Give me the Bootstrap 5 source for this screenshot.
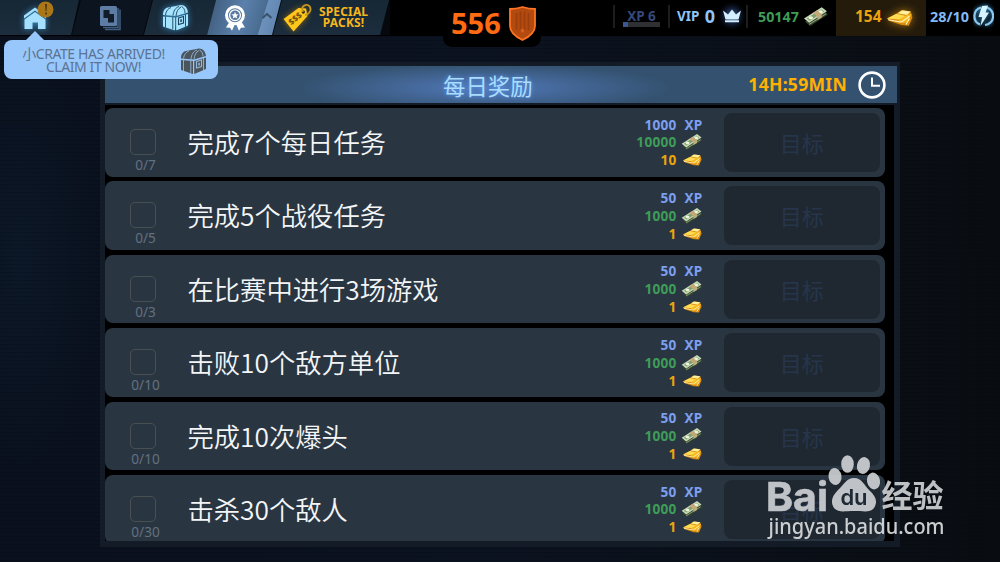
<!DOCTYPE html>
<html lang="zh-CN">
<head>
  <meta charset="UTF-8">
  <title>每日奖励</title>
  <link rel="stylesheet" href="https://cdn.jsdelivr.net/npm/bootstrap@5.3.2/dist/css/bootstrap.min.css">
  <style>
    body {
      width: 1000px;
      height: 562px;
      font-family: "Noto Sans", "Noto Sans CJK SC", sans-serif;
      color: #fff;
      background:
        repeating-linear-gradient(rgba(0,0,0,.16) 0 1px, transparent 1px 4px),
        radial-gradient(ellipse 90px 230px at 20px 260px, #0c1828, transparent),
        linear-gradient(90deg, #0a101d, #0c1320 50%, #090d12);
    }
    svg { display: block; flex: none; }

    /* top bar */
    .topbar { height: 36px; background: #000; }
    .tabs { width: 390px; height: 35px; background: #05090e; }
    .tab { height: 35px; background: linear-gradient(#162735, #1c2d3d); clip-path: polygon(9px 0, 100% 0, calc(100% - 9px) 100%, 0 100%); }
    .tab-home { width: 79px; clip-path: polygon(0 0, 100% 0, calc(100% - 8px) 100%, 0 100%); }
    .tab-doc { width: 80px; margin-left: -7px; background: #0c141f; }
    .tab-crate { width: 72px; margin-left: -8px; }
    .tab-medal { width: 74px; margin-left: -9px; background: linear-gradient(107deg, #3b5776 0, #5b80ab 45%, #4a6c91 72%, #6c91bb 73%, #5c80ab); }
    .tab-packs { width: 116px; margin-left: -8px; }
    .packs-text { padding: 0 0 1px 1px; font: bold 12px/11.3px "Noto Sans", sans-serif; color: #f5b51c; text-align: center; letter-spacing: .15px; }
    .score { width: 98px; height: 47px; margin-left: 53px; background: #000; border-radius: 0 0 9px 9px; color: #ff6a13; font-size: 29px; line-height: 47px; }
    .score-value { width: 66px; padding: 0 0 2px 8px; }
    .stat { height: 36px; line-height: 33px; font-weight: 700; font-size: 14.5px; white-space: nowrap; }
    .sep { width: 2px; height: 23px; margin-top: 5px; background: #1d1d1d; }
    .xp { width: 37px; height: 28px; margin: 0 8px; font-size: 13.5px; line-height: 32px; color: #34487a; text-align: center; }
    .xp-bar { width: 37px; height: 5px; margin-top: -10px; background: #2f3033; }
    .xp-bar div { width: 5px; height: 5px; background: #3d5793; }

    /* crate message */
    .bubble { left: 4px; top: 40px; width: 213.5px; height: 39px; padding: 0 11px 0 12px; background: #98c8fb; border-radius: 8px; color: #5b7292; font: 14px/12.6px "Noto Sans", "Noto Sans CJK SC", sans-serif; }
    .bubble::before { content: ""; position: absolute; left: 22px; top: -9px; border: solid transparent; border-width: 0 9px 9px; border-bottom-color: #98c8fb; }
    .bubble-text { width: 155px; padding-top: 3px; text-align: center; letter-spacing: -.42px; white-space: nowrap; }

    /* panel */
    .panel { width: 800px; height: 485px; margin: 26px 0 0 100px; padding: 4px 3px 0 5px; background: #131c26; }
    .panel-head { height: 37px; background: radial-gradient(ellipse 185px 24px at 380px 22px, #5078b8, transparent), #345270; }
    .panel-title { width: 90px; margin-left: 338px; font-size: 22.4px; line-height: 36px; color: #a9dcff; text-shadow: 0 0 5px #5c9cf0; font-family: "Noto Sans CJK SC", sans-serif; }
    .timer { color: #ffb000; font-weight: 700; font-size: 17.6px; letter-spacing: .25px; }
    .missions { width: 789px; height: 436px; margin-top: 2px; padding-top: 3px; background: #000; overflow: hidden; }
    .mission { width: 780px; height: 68.6px; margin-bottom: 4.85px; padding: 0 5px 0 25px; border-radius: 8px; background: #293642; flex: none; }
    .check-col { width: 31px; }
    .check-box { width: 26px; height: 26px; margin: 21px 0 0; border: 1.5px solid #4a5051; border-radius: 5px; }
    .progress-text { width: 31px; margin-top: 1px; font: 400 13.6px/17px "Noto Sans", sans-serif; color: #64707e; text-align: center; }
    .mission-title { margin-left: 26.5px; padding-bottom: 2px; font: 350 26.3px/67px "Noto Sans CJK SC", sans-serif; color: #f3f5f7; }
    .rewards { width: 68px; margin-right: 21px; font-weight: 700; font-size: 13.6px; line-height: 17.8px; letter-spacing: .25px; }
    .reward-unit { width: 26px; padding-left: 4px; }
    .c-xp { color: #7d9ff0; }
    .c-cash { color: #3f9c58; }
    .c-gold { color: #eba40e; }
    .goal { width: 156.5px; height: 59px; border-radius: 8px; background: #1f2831; color: #26354b; font: 400 22px/59px "Noto Sans CJK SC", sans-serif; text-align: center; }

    .watermark { left: 760px; top: 450px; }
  </style>
</head>
<body class="position-relative overflow-hidden m-0">

<!-- shared icons -->
<svg width="0" height="0" class="position-absolute">
  <symbol id="cash" viewBox="0 0 24 20">
    <path d="M1 15 19 4l4 4L6 19z" fill="#34462c"/>
    <path d="M0 12 17 1l5 4L5 16z" fill="#c9d9b6"/>
    <path d="M2.500 12 16.500 3l3 2.200L5.500 14z" fill="#7fa070"/>
    <ellipse cx="6.500" cy="11.200" rx="2.200" ry="1.500" fill="#eef3dc"/>
    <ellipse cx="16" cy="5.500" rx="2.200" ry="1.500" fill="#eef3dc"/>
    <path d="m8.500 6.600 4-2.500 4.500 4V11l-4 2.400V10z" fill="#c4a878"/>
    <path d="m5 17.500 16-10" stroke="#a9c093" stroke-width=".8"/>
  </symbol>
  <symbol id="gold" viewBox="0 0 22 15">
    <path d="M0 8 8 4l4-3 8 1 1.500 5-3 7-6-.5L2 10z" fill="#d8890b"/>
    <path d="m0 8 8-4 9 2-5 3z" fill="#ffdb52"/>
    <path d="m9 3.500 4-2.500 7 1-3 3z" fill="#fff09a"/>
    <path d="m9 9 8-4 4-1-3 6-4 2z" fill="#f7b920"/>
    <path d="m1 9 11 2 7-5M16 13l3-5" stroke="#fff4b8" stroke-width="1" fill="none"/>
  </symbol>
  <!-- chest with a domed lid, lit front on the right -->
  <symbol id="crate" viewBox="0 0 27 26">
    <path d="M1 10.500C1 6 3 3.500 6 3L19 .5c4 0 6.500 3 7 7.500l-12 3.500z"/>
    <path d="m1 12 12 1v13L1 22zM14.200 13 26 9.500V21l-11.800 5z"/>
    <path d="M3.500 10.500C4 6.500 6 4 9 3M11 11C11.500 6.500 13.500 3 17 2M14 11.500C14.500 7 16 4 19 2.500M23 8.500C23 5 21.500 3 19.500 2" stroke="var(--line)" stroke-width=".9" fill="none"/>
    <path d="M3.500 12v11M10.800 12.500V25M23.500 10v12" stroke="var(--line)" stroke-width=".9" fill="none"/>
    <path d="m16.500 13.500 5-1.500v6.500l-5 1.500z" stroke="var(--line)" stroke-width="1.100"/>
    <path d="M18.300 14.800h1.500v2.700h-1.500z" fill="var(--line)"/>
  </symbol>
</svg>

<header class="topbar d-flex align-items-start">
  <nav class="tabs d-flex">
    <div class="tab tab-home">
      <svg width="79" height="35" viewBox="0 0 79 35">
        <g fill="#a5e1ff" style="filter:drop-shadow(0 0 3px #3e93c8)">
          <path d="M24 15.500 35 7.500l11 8v3L35 10.500l-11 8z"/>
          <path d="M24.500 19.500 35 12l10.500 7.500V29H38v-6.500h-5.500V29h-8z"/>
        </g>
        <circle cx="45.500" cy="9.500" r="8" fill="#a97618"/>
        <path d="M45 4h2l-.5 7h-1zM45.200 12.500h1.800v2h-1.800z" fill="#4c3a12"/>
      </svg>
    </div>
    <div class="tab tab-doc">
      <svg width="80" height="35" viewBox="72 0 80 35">
        <path d="M105 29.500h15V9.500M103 27.500h15V8" fill="none" stroke="#3f5e80" stroke-width="1.500"/>
        <rect x="100" y="6" width="17" height="20" rx="1.500" fill="#5d7da5"/>
        <path d="M103.500 10h6v4h4.500v8.500h-6V18h-4.500z" fill="#121b28"/>
      </svg>
    </div>
    <div class="tab tab-crate">
      <svg width="72" height="35" viewBox="144 0 72 35">
        <use href="#crate" x="162" y="4.500" width="27" height="26" fill="#a5e4ff" style="--line:#1f4259;filter:drop-shadow(0 0 3px #3685b5)"/>
      </svg>
    </div>
    <div class="tab tab-medal">
      <svg width="74" height="35" viewBox="207 0 74 35">
        <path d="m230 21-4 6.500 4 .2 2 3 3-7zM241 21l4 6.500-4 .2-2 3-3-7z" fill="#fff"/>
        <circle cx="235" cy="15.300" r="8.500" fill="#57799f" stroke="#fff" stroke-width="3"/>
        <circle cx="235" cy="15.300" r="5.400" fill="none" stroke="#fff" stroke-width="1.300"/>
        <path d="m235 11.800 1 2.400 2.600.2-2 1.700.7 2.500-2.300-1.400-2.300 1.400.7-2.500-2-1.700 2.600-.2z" fill="#fff"/>
        <path d="m262.500 18 4.500-4 4.500 4" fill="none" stroke="#3b546f" stroke-width="2.200"/>
      </svg>
    </div>
    <div class="tab tab-packs d-flex align-items-center">
      <svg width="45" height="35" viewBox="273 0 45 35">
        <path d="m283.500 19 15-11 7.500.5 1.500 7.500-14 15.500z" fill="#ffc61c" style="filter:drop-shadow(0 0 3px #8a6410)"/>
        <circle cx="303.300" cy="12" r="1.700" fill="#2b2a1c"/>
        <path d="M303 12c-3-7 5-9 7-5s-2 8-5 8" fill="none" stroke="#c69420" stroke-width="1.800"/>
        <text transform="translate(291.500 25.500) rotate(-40)" font-size="8.500" font-weight="700" fill="#6a4f10">$$$</text>
      </svg>
      <div class="packs-text">SPECIAL<br>PACKS!</div>
    </div>
  </nav>

  <div class="score d-flex align-items-center fw-bold">
    <span class="score-value">556</span>
    <svg width="27" height="35" viewBox="0 0 27 35">
      <path d="M1 3Q7 3 13.500 1 20 3 26 3v17q0 8-12.500 14Q1 28 1 20z" fill="#b34a10" stroke="#ff7422" stroke-width="1.800"/>
      <path d="M7.500 7v17M11.500 5.500v19M15.500 5.500v19M19.500 7v17" stroke="#9c3f0d" stroke-width="1.800"/>
      <path d="m13.500 22 .8 1.600 1.700.2-1.200 1.200.3 1.700-1.600-.8-1.600.8.3-1.700-1.200-1.200 1.700-.2z" fill="#d9601c"/>
    </svg>
  </div>

  <div class="stat d-flex" style="margin-left:72px">
    <div class="sep"></div>
    <div class="xp">XP 6<div class="xp-bar"><div></div></div></div>
    <div class="sep"></div>
    <div class="d-flex" style="width:76px;padding-left:7px;color:#8fc5fa">
      <span style="width:29px;font-size:13.500px">VIP</span>
      <span style="width:14px;font-size:18px">0</span>
      <svg width="28" height="34" viewBox="718 0 28 34">
        <defs><radialGradient id="glow"><stop stop-color="#4a77c8" stop-opacity=".9"/><stop offset="1" stop-color="#16264a" stop-opacity="0"/></radialGradient></defs>
        <circle cx="732" cy="16" r="14" fill="url(#glow)"/>
        <path d="m723 10.500 5 4 4-5 4 5 5-4-2.500 9h-13zM725 20.300h14v2h-14z" fill="#d4efff"/>
      </svg>
    </div>
    <div class="sep"></div>
    <div class="d-flex c-cash" style="width:88px;padding-left:10px">
      <span style="width:46px;font-size:14.300px">50147</span>
      <svg width="25" height="21" style="margin-top:6px"><use href="#cash" width="25" height="21"/></svg>
    </div>
    <div class="d-flex c-gold" style="width:90px;padding-left:19px;background:#241b0b">
      <span style="width:32px;font-size:15.500px">154</span>
      <svg width="26" height="18" style="margin-top:9px;filter:drop-shadow(0 0 4px #a87010)"><use href="#gold" width="26" height="18"/></svg>
    </div>
    <div class="d-flex" style="padding-left:4px;color:#82b9f5">
      <span style="width:43px;font-size:14.400px">28/10</span>
      <svg width="21" height="34" viewBox="0 0 21 34">
        <g style="filter:drop-shadow(0 0 2px #3ba0e0)">
          <path d="M8 7.500A9 9 0 0 0 7 24.500M14 7.500A9 9 0 0 1 12 25" fill="none" stroke="#8cc8ee" stroke-width="2.200"/>
          <path d="m9 6 6-.5-2.500 7H16L7.500 26l1.700-9H5.500z" fill="#d8f4ff"/>
        </g>
      </svg>
    </div>
  </div>
</header>

<main class="panel">
  <div class="panel-head d-flex align-items-center">
    <div class="panel-title text-nowrap">每日奖励</div>
    <div class="timer ms-auto">14H:59MIN</div>
    <svg width="28" height="28" viewBox="0 0 28 28" style="margin:0 11px">
      <circle cx="14" cy="14" r="12.400" fill="none" stroke="#fff" stroke-width="2.600"/>
      <path d="M14 6.500v8.300h8" fill="none" stroke="#fff" stroke-width="2"/>
    </svg>
  </div>
  <div class="missions d-flex flex-column" id="missions"></div>
</main>

<div class="bubble position-absolute d-flex align-items-center justify-content-between">
  <div class="bubble-text">小CRATE HAS ARRIVED!<br>CLAIM IT NOW!</div>
  <svg width="27" height="26" viewBox="0 0 27 26" style="margin-top:3px"><use href="#crate" fill="#4b555e" style="--line:#98b8d8"/></svg>
</div>

<svg class="watermark position-absolute" width="200" height="100" viewBox="760 450 200 100" fill="#c8cbce" opacity=".95">
  <text x="766" y="510.500" font-family="Inter, sans-serif" font-weight="700" font-size="40" stroke="#c8cbce" stroke-width=".6" textLength="62" lengthAdjust="spacingAndGlyphs">Bai</text>
  <ellipse cx="835" cy="476.500" rx="6.500" ry="8.500" transform="rotate(-8 835 476.500)"/>
  <ellipse cx="847.500" cy="464" rx="6.300" ry="8.800"/>
  <ellipse cx="863.500" cy="465.500" rx="6.500" ry="8.500" transform="rotate(12 863.500 465.500)"/>
  <ellipse cx="873.500" cy="481" rx="6.500" ry="8.500" transform="rotate(-12 873.500 481)"/>
  <path d="M854 478c8 0 10 7 15 12 7 6 9 12 5 18-4 5-10 3-20 3s-15 2-20-3c-4-6-2-12 4-18 6-5 8-12 16-12z"/>
  <text x="840.500" y="505" font-family="Inter, sans-serif" font-weight="600" font-size="22" fill="#202a34" textLength="27">du</text>
  <text x="881.500" y="507" font-family="Noto Sans CJK SC, sans-serif" font-weight="700" font-size="31">经验</text>
  <text x="768.500" y="533.500" font-family="Noto Sans, sans-serif" font-weight="500" font-size="21" fill="#d6d8da" textLength="176" lengthAdjust="spacingAndGlyphs">jingyan.baidu.com</text>
</svg>

<script src="https://cdn.jsdelivr.net/npm/bootstrap@5.3.2/dist/js/bootstrap.bundle.min.js"></script>
<script>
const missions = [
  { title: '完成7个每日任务', total: 7, xp: 1000, cash: 10000, gold: 10 },
  { title: '完成5个战役任务', total: 5, xp: 50, cash: 1000, gold: 1 },
  { title: '在比赛中进行3场游戏', total: 3, xp: 50, cash: 1000, gold: 1 },
  { title: '击败10个敌方单位', total: 10, xp: 50, cash: 1000, gold: 1 },
  { title: '完成10次爆头', total: 10, xp: 50, cash: 1000, gold: 1 },
  { title: '击杀30个敌人', total: 30, xp: 50, cash: 1000, gold: 1 }
];

document.getElementById('missions').innerHTML = missions.map(m => `
  <div class="mission d-flex align-items-center">
    <div class="check-col align-self-start">
      <div class="check-box"></div>
      <div class="progress-text">0/${m.total}</div>
    </div>
    <div class="mission-title">${m.title}</div>
    <div class="rewards ms-auto">
      <div class="d-flex justify-content-end c-xp"><span>${m.xp}</span><span class="reward-unit ps-2">XP</span></div>
      <div class="d-flex justify-content-end c-cash"><span>${m.cash}</span><span class="reward-unit"><svg width="23" height="18"><use href="#cash" width="23" height="18"/></svg></span></div>
      <div class="d-flex justify-content-end c-gold"><span>${m.gold}</span><span class="reward-unit"><svg width="22" height="17"><use href="#gold" x="2" y="2" width="19" height="14"/></svg></span></div>
    </div>
    <div class="goal">目标</div>
  </div>
`).join('');
</script>

</body>
</html>
